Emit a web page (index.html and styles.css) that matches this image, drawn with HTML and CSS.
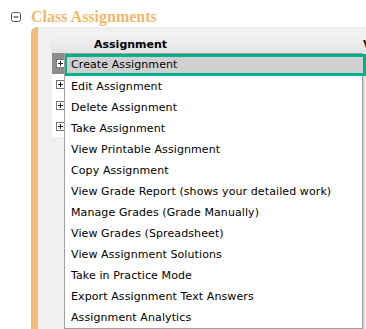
FILE: index.html
```html
<!DOCTYPE html>
<html>
<head>
<meta charset="utf-8">
<link rel="stylesheet" href="styles.css">
</head>
<body>
<div class="section">
  <div class="section-head">
    <svg class="toggle" width="10" height="10" viewBox="0 0 10 10"><rect x="0.5" y="0.5" width="9" height="9" rx="2" fill="#fff" stroke="#555"/><path d="M2.5 5h5" stroke="#222" stroke-width="1"/></svg>
    <span class="title">Class Assignments</span>
  </div>
  <div class="section-body">
    <div class="table">
      <div class="thead">
        <span class="th-spacer"></span>
        <span class="th">Assignment</span>
        <span class="th th-next">V</span>
      </div>
      <div class="row row-active"><span class="exp"><svg width="9" height="9" viewBox="0 0 9 9"><rect x="0.5" y="0.5" width="8" height="8" fill="#fff" stroke="#777"/><path d="M2 4.5h5M4.5 2v5" stroke="#222"/></svg></span></div>
      <div class="row"><span class="exp"><svg width="9" height="9" viewBox="0 0 9 9"><rect x="0.5" y="0.5" width="8" height="8" fill="#fff" stroke="#777"/><path d="M2 4.5h5M4.5 2v5" stroke="#222"/></svg></span></div>
      <div class="row"><span class="exp"><svg width="9" height="9" viewBox="0 0 9 9"><rect x="0.5" y="0.5" width="8" height="8" fill="#fff" stroke="#777"/><path d="M2 4.5h5M4.5 2v5" stroke="#222"/></svg></span></div>
      <div class="row"><span class="exp"><svg width="9" height="9" viewBox="0 0 9 9"><rect x="0.5" y="0.5" width="8" height="8" fill="#fff" stroke="#777"/><path d="M2 4.5h5M4.5 2v5" stroke="#222"/></svg></span></div>
    </div>
    <ul class="menu">
      <li class="item item-focus">Create Assignment</li>
      <li class="item">Edit Assignment</li>
      <li class="item">Delete Assignment</li>
      <li class="item">Take Assignment</li>
      <li class="item">View Printable Assignment</li>
      <li class="item">Copy Assignment</li>
      <li class="item">View Grade Report (shows your detailed work)</li>
      <li class="item">Manage Grades (Grade Manually)</li>
      <li class="item">View Grades (Spreadsheet)</li>
      <li class="item">View Assignment Solutions</li>
      <li class="item">Take in Practice Mode</li>
      <li class="item">Export Assignment Text Answers</li>
      <li class="item">Assignment Analytics</li>
    </ul>
  </div>
</div>
</body>
</html>
```
FILE: styles.css
```css
html, body {
  margin: 0;
  padding: 0;
  background: #fff;
  width: 366px;
  height: 329px;
  overflow: hidden;
}
.section {
  padding: 8px 0 0 11px;
}
.section-head {
  display: flex;
  align-items: center;
  height: 18px;
}
.toggle {
  display: block;
  margin-right: 10px;
}
.title {
  font-family: "Liberation Serif", "Times New Roman", serif;
  font-weight: bold;
  font-size: 16px;
  color: #f0b868;
  line-height: 18px;
}
.section-body {
  position: relative;
  margin-left: 20px;
  margin-top: 1px;
  height: 302px;
  border-left: 7px solid #f0bc78;
  border-top-left-radius: 6px;
  background: #f0f0f0;
  padding: 6px 0 0 13px;
  box-sizing: border-box;
  overflow: hidden;
}
.table {
  width: 400px;
}
.thead {
  display: flex;
  height: 20px;
  box-sizing: border-box;
  padding-top: 5px;
  background: linear-gradient(#f2f2f2, #e4e4e4);
  font-family: "DejaVu Sans", Verdana, sans-serif;
  font-weight: bold;
  font-size: 11px;
  line-height: 13px;
  color: #000;
}
.th-spacer {
  width: 43px;
}
.th {
  width: 269px;
}
.th-next {
  width: auto;
  color: #2a1400;
}
.row {
  height: 21px;
  display: flex;
  align-items: center;
  background: #fff;
  width: 14px;
  margin-left: 1px;
}
.row-active {
  background: #8c8c8c;
}
.exp {
  display: block;
  margin-left: 4px;
  height: 9px;
}
.exp svg {
  display: block;
}
.menu {
  position: absolute;
  left: 26px;
  top: 26px;
  width: 297px;
  margin: 0;
  padding: 0;
  list-style: none;
  background: #fff;
  border: 1px solid #a0a0a0;
  box-shadow: 1px 1px 1px rgba(0,0,0,0.15);
  font-family: "DejaVu Sans", Verdana, sans-serif;
  font-size: 11px;
  letter-spacing: 0.1px;
  color: #000;
}
.item {
  height: 21px;
  line-height: 21px;
  padding-left: 6px;
  white-space: nowrap;
}
.item-focus {
  box-sizing: border-box;
  height: 22px;
  line-height: 16px;
  background: #d0d0d0;
  border: 3px solid #00b08a;
  border-left-width: 2px;
  padding-left: 4px;
  margin-right: -4px;
  margin-left: 0;
}
```
